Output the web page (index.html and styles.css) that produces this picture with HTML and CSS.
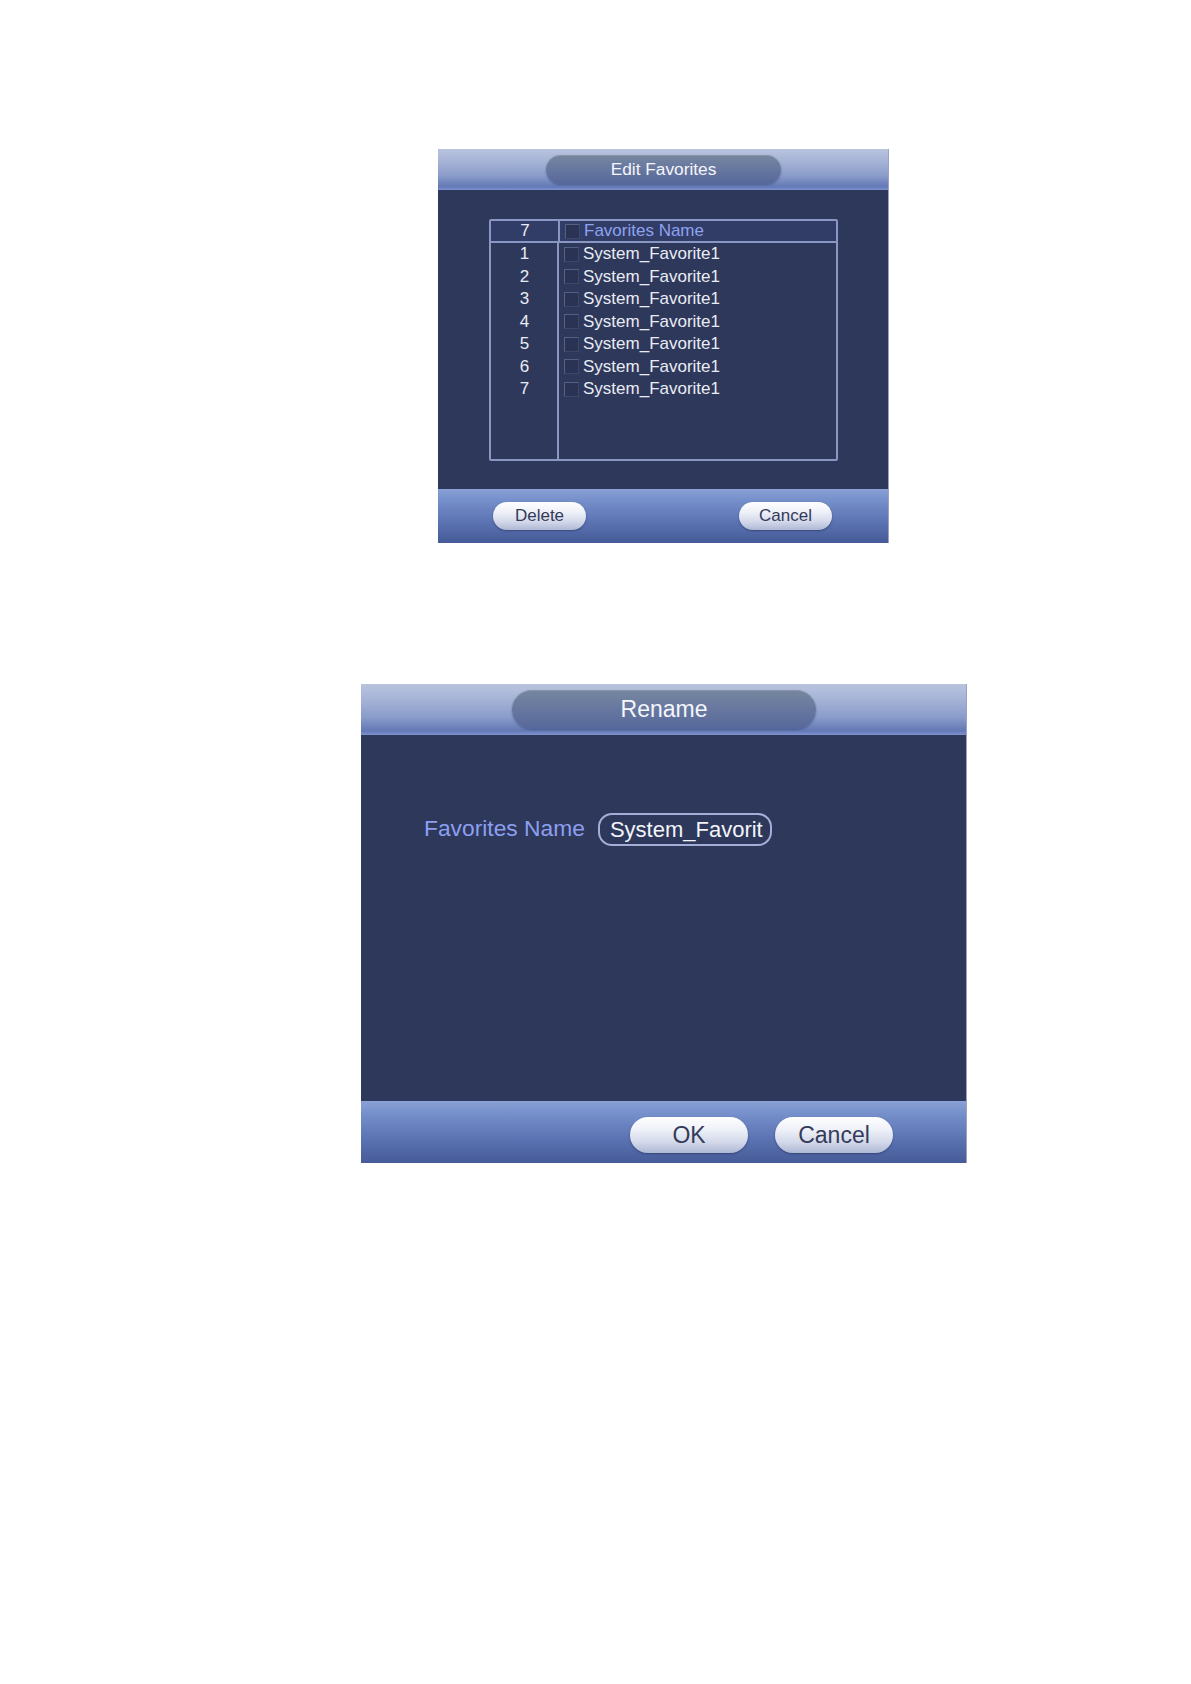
FILE: index.html
```html
<!DOCTYPE html>
<html lang="en">
<head>
<meta charset="utf-8">
<title>Favorites dialogs</title>
<link rel="stylesheet" href="styles.css">
</head>
<body>
<div class="page">
  <section class="dlg dlg-edit">
    <header class="dlg-head">
      <div class="pill pill-edit">Edit Favorites</div>
    </header>
    <div class="dlg-body edit-body">
      <div class="tbl">
        <div class="thead">
          <div class="num-cell">7</div>
          <div class="name-cell head-name"><span class="cb"></span><span>Favorites Name</span></div>
        </div>
        <div class="tbody">
          <div class="nums">
            <div class="num-cell">1</div>
            <div class="num-cell">2</div>
            <div class="num-cell">3</div>
            <div class="num-cell">4</div>
            <div class="num-cell">5</div>
            <div class="num-cell">6</div>
            <div class="num-cell">7</div>
          </div>
          <div class="names">
            <div class="name-cell"><span class="cb"></span><span>System_Favorite1</span></div>
            <div class="name-cell"><span class="cb"></span><span>System_Favorite1</span></div>
            <div class="name-cell"><span class="cb"></span><span>System_Favorite1</span></div>
            <div class="name-cell"><span class="cb"></span><span>System_Favorite1</span></div>
            <div class="name-cell"><span class="cb"></span><span>System_Favorite1</span></div>
            <div class="name-cell"><span class="cb"></span><span>System_Favorite1</span></div>
            <div class="name-cell"><span class="cb"></span><span>System_Favorite1</span></div>
          </div>
        </div>
      </div>
    </div>
    <footer class="dlg-foot edit-foot">
      <button class="btn btn-sm">Delete</button>
      <button class="btn btn-sm">Cancel</button>
    </footer>
  </section>

  <section class="dlg dlg-rename">
    <header class="dlg-head rename-head">
      <div class="pill pill-rename">Rename</div>
    </header>
    <div class="dlg-body rename-body">
      <div class="field-row">
        <span class="field-label">Favorites Name</span>
        <div class="field"><span class="field-text">System_Favorit</span></div>
      </div>
    </div>
    <footer class="dlg-foot rename-foot">
      <button class="btn btn-lg">OK</button>
      <button class="btn btn-lg">Cancel</button>
    </footer>
  </section>
</div>
</body>
</html>
```
FILE: styles.css
```css
html, body {
  margin: 0;
  padding: 0;
  background: #ffffff;
}

body {
  font-family: "Liberation Sans", Arial, sans-serif;
}

.page {
  display: flex;
  flex-direction: column;
  align-items: flex-start;
  padding-top: 149px;
}

.dlg {
  display: flex;
  flex-direction: column;
  background: #2e385b;
  box-sizing: border-box;
  border-right: 1px solid #9aa4c2;
}

.dlg-edit {
  margin-left: 438px;
  width: 451px;
  height: 394px;
}

.dlg-rename {
  margin-left: 361px;
  margin-top: 141px;
  width: 606px;
  height: 479px;
}

/* ---------- header ---------- */
.dlg-head {
  height: 41px;
  flex: none;
  display: flex;
  justify-content: center;
  align-items: flex-start;
  box-sizing: border-box;
  padding-top: 6px;
  background: linear-gradient(to bottom, #b9c4de 0%, #a5b3d6 30%, #8a9cca 65%, #6379b5 92%, #7e92cf 100%);
}

.rename-head {
  height: 51px;
  padding-top: 6px;
}

.pill {
  display: flex;
  align-items: center;
  justify-content: center;
  color: #f4f6fb;
  background: linear-gradient(to bottom, #76869f 0%, #6a7aa0 40%, #56689a 100%);
  box-shadow: 0 1px 2px rgba(40, 50, 90, 0.45), inset 0 1px 0 rgba(255, 255, 255, 0.15);
}

.pill-edit {
  width: 235px;
  height: 29px;
  border-radius: 15px;
  font-size: 17.3px;
  margin-left: 1px;
}

.pill-rename {
  width: 304px;
  height: 39px;
  border-radius: 20px;
  font-size: 23px;
  margin-left: 1px;
}

/* ---------- body ---------- */
.dlg-body {
  flex: 1;
  box-sizing: border-box;
}

.edit-body {
  padding: 29px 50px 28px 51px;
  display: flex;
}

.tbl {
  flex: 1;
  display: flex;
  flex-direction: column;
  border: 2px solid #8a97c2;
  border-radius: 2px;
  color: #e9ecf4;
  font-size: 17px;
}

.thead {
  display: flex;
  height: 20px;
  border-bottom: 2px solid #8a97c2;
  background: #313d66;
}

.tbody {
  flex: 1;
  display: flex;
}

.nums {
  width: 66px;
  border-right: 2px solid #8a97c2;
  flex: none;
}

.thead .num-cell {
  width: 66px;
  border-right: 2px solid #8a97c2;
  height: 20px;
}

.num-cell {
  height: 22.5px;
  display: flex;
  align-items: center;
  justify-content: center;
  padding-left: 1px;
}

.names {
  flex: 1;
}

.name-cell {
  height: 22.5px;
  display: flex;
  align-items: center;
  padding-left: 5px;
  gap: 4px;
}

.thead .name-cell {
  height: 20px;
  flex: 1;
}

.head-name {
  color: #8fa2ee;
}

.cb {
  width: 15px;
  height: 15px;
  box-sizing: border-box;
  background: #2a3354;
  border-top: 1px solid #556085;
  border-left: 1px solid #556085;
  border-right: 1px solid #3c4669;
  border-bottom: 1px solid #3c4669;
  flex: none;
}

/* ---------- footer ---------- */
.dlg-foot {
  flex: none;
  display: flex;
  align-items: flex-start;
  box-sizing: border-box;
  background: linear-gradient(to bottom, #8aa1d6 0%, #7690cb 20%, #5c74b3 60%, #465b98 100%);
}

.edit-foot {
  height: 54px;
  padding: 13px 56px 0 55px;
  justify-content: space-between;
}

.rename-foot {
  height: 62px;
  padding: 16px 73px 0 0;
  justify-content: flex-end;
  gap: 27px;
}

.btn {
  border: none;
  font-family: "Liberation Sans", Arial, sans-serif;
  color: #343b5a;
  background: linear-gradient(to bottom, #ffffff 0%, #eef1f8 35%, #d3d9ea 70%, #aeb8d4 100%);
  box-shadow: 0 1px 2px rgba(30, 40, 80, 0.5);
  padding: 0;
  display: flex;
  align-items: center;
  justify-content: center;
}

.btn-sm {
  width: 93px;
  height: 28px;
  border-radius: 14px;
  font-size: 17px;
}

.btn-lg {
  width: 118px;
  height: 36px;
  border-radius: 18px;
  font-size: 23px;
}

/* ---------- rename body ---------- */
.rename-body {
  padding: 78px 0 0 63px;
}

.field-row {
  display: flex;
  align-items: center;
  gap: 13px;
}

.field-label {
  color: #8c9ff0;
  font-size: 22.8px;
  margin-top: -3px;
}

.field {
  width: 174px;
  height: 33px;
  box-sizing: border-box;
  border: 2px solid #a3afd8;
  border-radius: 14px;
  padding: 0 6px 0 10px;
  display: flex;
  align-items: center;
  color: #f2f4fa;
  font-size: 22px;
}

.field-text {
  flex: 1;
  overflow: hidden;
  white-space: nowrap;
}
```
